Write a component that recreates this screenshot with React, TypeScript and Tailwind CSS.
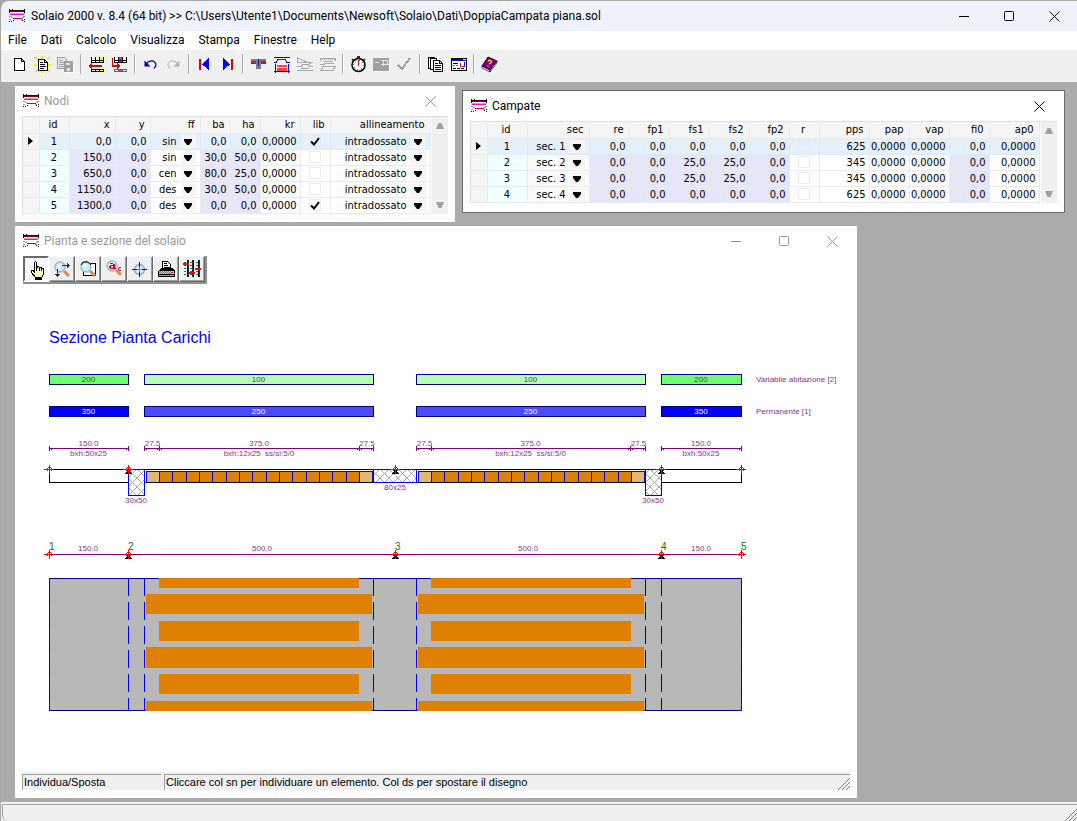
import type { ReactNode } from "react";

type IconProps = { children: ReactNode; w?: number; h?: number };

function Icon({ children, w = 17, h = 17 }: IconProps) {
  return (
    <svg width={w} height={h} viewBox={`0 0 ${w} ${h}`} shapeRendering="crispEdges" fill="none" aria-hidden="true" className="shrink-0">
      {children}
    </svg>
  );
}

function AppIcon() {
  return (
    <Icon w={17} h={14}>
      <path d="M0 1h16v1H0z" fill="#400000" />
      <path d="M0 0h1v1H0zM3 0h1v1H3zM15 0h1v1h-1zM0 3h1v1H0zM15 3h1v1h-1zM0 1h1v2H0zM15 1h1v2h-1z" fill="#000" />
      <path d="M1 2h14v1H1z" fill="#900000" />
      <path d="M1 4h15v1H1z" fill="#c8a0c8" />
      <path d="M1 5h14v1H1z" fill="#ff00ff" />
      <path d="M0 7h2v1H0zM2 8h2v1H2zM0 10h2v1H0zM14 7h2v1h-2zM13 8h2v1h-2zM12 10h2v1h-2z" fill="#999" />
      <path d="M4 9h9v1H4z" fill="#e00000" />
      <path d="M2 12h1v1H2zM4 11h1v1H4zM0 12h1v1H0zM13 11h1v1h-1zM15 10h1v1h-1zM15 12h1v1h-1z" fill="#000" />
    </Icon>
  );
}

const mainIcons: (ReactNode | null)[] = [
  <Icon>
    <path d="M3 2h8l3 3v11H3z" fill="#fff" />
    <path d="M3.500 2.500h7l3 3v9h-10zM10.500 2.500v3h3" stroke="#000" />
  </Icon>,
  <Icon>
    <path d="M1 1l3 3M16 1l-3 3M1 16l3-3M16 16l-3-3M0 9h3M14 9h3M8 0v3M8 14v3" stroke="#ffee00" strokeWidth="1.500" />
    <path d="M4.500 3.500h6l3 3v8h-9z" fill="#fff" stroke="#000" />
    <path d="M10.500 3.500v3h3M6 6.500h3M6 8.500h5M6 10.500h6M6 12.500h4" stroke="#000" />
  </Icon>,
  <Icon>
    <path d="M.5 1.500h7l2 2v9h-9z" fill="#e8e8e8" stroke="#a0a0a0" />
    <path d="M2 4.500h4M2 6.500h6M2 8.500h5M2 10.500h5" stroke="#a0a0a0" />
    <path d="M7 5h9v11H7z" fill="#a0a0a0" />
    <path d="M9 7h4v2H9zM10 12h3v3h-3z" fill="#e8e8e8" />
    <path d="M16.500 6v10.500H8" stroke="#fff" />
  </Icon>,
  null,
  <Icon>
    <path d="M4 2h8v5H4zM4 13h8v3H4z" fill="#fff" />
    <path d="M12 1h4v6h-4zM12 13h4v3h-4z" fill="#ffff00" />
    <path d="M3 4.500h13M3 6.500h13M3.500 1v6M7.500 1v6M11.500 1v6M15.500 1v6M3.500 13.500h12v2h-12zM7.500 13v3M11.500 13v3" stroke="#000" />
    <path d="M1 9h13v2H1z" fill="#e00000" />
    <path d="M0 10l4-3v6z" fill="#e00000" />
  </Icon>,
  <Icon>
    <path d="M4 2h4v5H4zM12 2h4v5h-4z" fill="#fff" />
    <path d="M8 1h4v6H8zM8 13h4v3H8z" fill="#ff00ff" />
    <path d="M3 4.500h13M3 6.500h13M3.500 1v6M7.500 1v6M11.500 1v6M15.500 1v6" stroke="#000" />
    <path d="M3.500 13.500h12v2h-12zM7.500 13v3M11.500 13v3" stroke="#606060" />
    <path d="M1.500 2v8M1 10h7" stroke="#e00000" strokeWidth="1.500" />
    <path d="M10 10l-4-3v6z" fill="#e00000" />
  </Icon>,
  null,
  <svg width="17" height="17" viewBox="0 0 17 17" fill="none" aria-hidden="true">
    <path d="M4 8.500C6 5 10 4 12.500 6s1.500 4-.5 6.500" stroke="#000096" strokeWidth="1.200" />
    <path d="M2.500 4.500v6h6z" fill="#000096" />
  </svg>,
  <svg width="17" height="17" viewBox="0 0 17 17" fill="none" aria-hidden="true">
    <path d="M13 8.500C11 5 7 4 4.500 6s-1.500 4 .5 6.500" stroke="#a8a8a8" />
    <path d="M14.500 4.500v6h-6z" fill="#b0b0b0" />
  </svg>,
  null,
  <Icon>
    <path d="M3 3h2v11H3z" fill="#e00000" />
    <path d="M13 2v12L6 8.500z" fill="#0000ff" />
  </Icon>,
  <Icon>
    <path d="M12 3h2v11h-2z" fill="#e00000" />
    <path d="M4 2v12l7-5.500z" fill="#0000ff" />
  </Icon>,
  null,
  <Icon>
    <path d="M1 3h15v5h-5v5H6V8H1z" fill="#808080" />
    <path d="M1 5h15v3H1z" fill="#ff0000" />
    <path d="M6 3h5v10H6z" fill="#808080" />
    <path d="M8 3h1v7H8z" fill="#0000ff" />
  </Icon>,
  <Icon>
    <path d="M1 1.500h16M1 6.500h2l2-3h7l2 3h3M1 15.500h16M2.500 8v9M15.500 8v9" stroke="#0000ff" />
    <path d="M5 3.500h7" stroke="#404040" />
    <path d="M4 9h10v2H4zM4 12h10v3H4z" fill="#ff4040" />
  </Icon>,
  <Icon>
    <path d="M1.500 1v5h15M2 2l13 6M1 10.500h4l2-2h5l2 2h3M1 14.500h16M5 12.500h8" stroke="#a8a8a8" />
  </Icon>,
  <Icon>
    <path d="M1 2.500h16M1.500 2v3M16.500 2v3M4 5.500h10M1 8.500h4l1-1h9M4 10.500h12l-2 4H2z" stroke="#a8a8a8" />
    <path d="M3 3.500h13" stroke="#a8a8a8" strokeDasharray="1 1" />
  </Icon>,
  null,
  <svg width="17" height="17" viewBox="0 0 17 17" fill="none" aria-hidden="true">
    <path d="M7 1h3M8.500 1v2M2 3l2 2M15 3l-2 2" stroke="#000" strokeWidth="1.500" />
    <circle cx="8.500" cy="9" r="6.500" fill="#fff" stroke="#000" strokeWidth="1.500" />
    <circle cx="8.500" cy="9" r="4.800" stroke="#000" strokeDasharray="1 2.770" />
    <path d="M8.500 4v6" stroke="#e00000" />
  </svg>,
  <Icon>
    <path d="M0 2h16v13H0z" fill="#a0a0a0" />
    <path d="M8 4.500h7M10.500 5v5M14.500 5v4M2 6.500h4M8 8.500h8" stroke="#e8e8e8" />
    <path d="M16.500 3v12.500H1" stroke="#fff" />
  </Icon>,
  <Icon>
    <path d="M3 10l3 4 8-11" stroke="#fff" strokeWidth="2" />
    <path d="M2 9l4 4 8-11" stroke="#a0a0a0" strokeWidth="2" />
  </Icon>,
  null,
  <Icon>
    <path d="M1.500 1.500h6v11h-6z" fill="#fff" stroke="#000" />
    <path d="M3.500 2.500h6v11h-6z" fill="#fff" stroke="#000" />
    <path d="M6.500 4.500h6l3 3v8h-9z" fill="#fff" stroke="#000" />
    <path d="M12.500 4.500v3h3M8 7.500h3M8 9.500h6M8 11.500h6M8 13.500h6" stroke="#000" />
  </Icon>,
  <Icon>
    <path d="M1.500 2.500h15v12h-15z" fill="#fff" stroke="#000" />
    <path d="M2 3h14v2H2z" fill="#0000c8" />
    <path d="M13 3h3v1h-3z" fill="#fff" />
    <path d="M3 7.500h5M3 12.500h3M7 12.500h3M11 12.500h3" stroke="#000" />
    <path d="M3 9.500h2M6 9.500h2" stroke="#009090" />
    <path d="M10.500 7v4M12 10.500h3" stroke="#e00000" />
    <path d="M14.500 6v4" stroke="#0000ff" />
  </Icon>,
  null,
  <svg width="17" height="17" viewBox="0 0 17 17" fill="none" aria-hidden="true">
    <path d="M1 10l8 4v2l-8-4zM9 14l7-9v2l-7 9z" fill="#fff" stroke="#300030" strokeWidth=".7" />
    <path d="M7 1l9 4-7 9-8-4z" fill="#800080" stroke="#300030" />
    <path d="M7 5.500l1.500-1.500 2 1v1.500L8 8M7 9.500v1" stroke="#ffee00" strokeWidth="1.200" />
  </svg>,
];

const mainNames = ["Nuovo", "Esempio", "Copia", "", "Inserisci riga", "Aggiungi riga", "", "Annulla", "Ripeti", "", "Primo", "Ultimo", "", "Sezioni", "Solaio", "Momenti", "Armature", "", "Calcola", "Disegno", "Verifica", "", "Relazione", "Finestra", "", "Guida"];

function Lens({ x, y }: { x: number; y: number }) {
  return (
    <g shapeRendering="auto">
      <path d={`M${x + 4} ${y + 4}l5 5`} stroke="#e08a4a" strokeWidth="3" />
      <circle cx={x} cy={y} r="5" fill="#cfe8fb" stroke="#8fb4dc" strokeWidth="1.300" />
      <circle cx={x - 1} cy={y - 1} r="2" fill="#eef8ff" />
    </g>
  );
}

const drawTools: { name: string; icon: ReactNode }[] = [
  {
    name: "Individua/Sposta",
    icon: (
      <Icon w={20} h={20}>
        <path d="M8.500 12.500V2.500l1-1 1 1v5l2-1 1 1 2 0 1 1 1 0v6l-2 3v2h-6v-2l-4-5v-2h2z" fill="#ffffc8" stroke="#000" />
        <path d="M10.500 7v4M13.500 8v3M15.500 8v3" stroke="#000" />
        <path d="M9 18h7" stroke="#000" strokeWidth="2" />
      </Icon>
    ),
  },
  {
    name: "Zoom dinamico",
    icon: (
      <Icon w={20} h={20}>
        <Lens x={8} y={8} />
        <path d="M10 6.500h8M16.500 5v3M15.500 4v5M5.500 10v8M4 16.500h3M3 15.500h5" stroke="#303030" />
      </Icon>
    ),
  },
  {
    name: "Zoom finestra",
    icon: (
      <Icon w={20} h={20}>
        <path d="M5.500 4.500h12v12h-12z" fill="#fff" stroke="#000" />
        <Lens x={8} y={8} />
        <path d="M3 6l2-3h5l3 3" stroke="#000" shapeRendering="auto" />
      </Icon>
    ),
  },
  {
    name: "Zoom testo",
    icon: (
      <Icon w={20} h={20}>
        <Lens x={8} y={7} />
        <path d="M6 4h3v1H6zM9 5h2v5H9zM6 6h3v1H6zM5 7h2v2H5zM6 9h6v1H6zM15 8h2v1h-2zM14 9h1v2h-1zM15 11h2v1h-2z" fill="#e00000" />
      </Icon>
    ),
  },
  {
    name: "Centra",
    icon: (
      <svg width="20" height="20" viewBox="0 0 20 20" fill="none" aria-hidden="true">
        <circle cx="9.500" cy="10.500" r="5" fill="#d6ecfb" stroke="#7fa8d0" strokeWidth="1.300" />
        <path d="M9.500 3v5M9.500 13v5M2 10.500h5M12 10.500h5" stroke="#202020" />
        <path d="M9.500 8v5M7 10.500h5" stroke="#5a8fa8" />
      </svg>
    ),
  },
  {
    name: "Stampa",
    icon: (
      <Icon w={20} h={20}>
        <path d="M6.500 9.500v-7h5l3 3v4" fill="#fff" stroke="#000" />
        <path d="M8 4.500h3M8 6.500h4M8 8.500h6" stroke="#000" />
        <path d="M2 12l3-3h11l3 3v6H2z" fill="#000" />
        <path d="M3 12h15v3H3z" fill="#c8c8c8" />
        <path d="M4 12.500h12M3 13.500h12M4 14.500h12" stroke="#808080" strokeDasharray="1 1" />
        <path d="M3 16h15v1H3z" fill="#a0a0a0" />
        <path d="M15 13h2v1h-2z" fill="#e00000" />
      </Icon>
    ),
  },
  {
    name: "Opzioni",
    icon: (
      <Icon w={20} h={20}>
        <path d="M3 3v14M9 3v14M15 3v14" stroke="#008080" strokeWidth="2" strokeDasharray="1 2" />
        <path d="M5 1h1v17H5zM11 1h1v17h-1zM16 1h1v17h-1z" fill="#000" />
        <path d="M6 1h1v17H6zM10 1h1v17h-1zM17 1h1v17h-1z" fill="#303030" />
        <path d="M1 4h6v2H1zM7 13h6v2H7zM13 9h6v2h-6z" fill="#ff0000" />
      </Icon>
    ),
  },
];

function CloseGlyph() {
  return (
    <svg width="11" height="11" viewBox="0 0 11 11" fill="none" stroke="currentColor" aria-hidden="true">
      <path d="M.5.5l10 10M10.500.5l-10 10" />
    </svg>
  );
}

function MinGlyph() {
  return (
    <svg width="11" height="11" viewBox="0 0 11 11" stroke="currentColor" aria-hidden="true">
      <path d="M0 5.500h10" />
    </svg>
  );
}

function MaxGlyph() {
  return (
    <svg width="11" height="11" viewBox="0 0 11 11" fill="none" stroke="currentColor" aria-hidden="true">
      <rect x=".5" y=".5" width="9" height="9" rx="1" />
    </svg>
  );
}

type Tone = "white" | "soft" | "lav" | "id";
type Column = { key: string; width: number; align: "left" | "right" | "center"; tone: Tone; kind?: "select" | "check" };

const toneClass: Record<Tone, string> = {
  white: "bg-white",
  soft: "bg-[#fafafa]",
  lav: "bg-[#e6e6fa]",
  id: "bg-[#f0ffff]",
};
const alignClass = { left: "text-left", right: "text-right", center: "text-center" };

const nodeColumns: Column[] = [
  { key: "id", width: 30, align: "center", tone: "id" },
  { key: "x", width: 46, align: "right", tone: "lav" },
  { key: "y", width: 35, align: "right", tone: "lav" },
  { key: "ff", width: 50, align: "right", tone: "white", kind: "select" },
  { key: "ba", width: 30, align: "right", tone: "lav" },
  { key: "ha", width: 30, align: "right", tone: "lav" },
  { key: "kr", width: 40, align: "right", tone: "soft" },
  { key: "lib", width: 30, align: "right", tone: "white", kind: "check" },
  { key: "allineamento", width: 100, align: "right", tone: "white", kind: "select" },
];
const nodeRows = [
  ["1", "0,0", "0,0", "sin", "0,0", "0,0", "0,0000", "1", "intradossato"],
  ["2", "150,0", "0,0", "sin", "30,0", "50,0", "0,0000", "", "intradossato"],
  ["3", "650,0", "0,0", "cen", "80,0", "25,0", "0,0000", "", "intradossato"],
  ["4", "1150,0", "0,0", "des", "30,0", "50,0", "0,0000", "", "intradossato"],
  ["5", "1300,0", "0,0", "des", "0,0", "0,0", "0,0000", "1", "intradossato"],
];

const spanColumns: Column[] = [
  { key: "id", width: 40, align: "center", tone: "id" },
  { key: "sec", width: 62, align: "right", tone: "soft", kind: "select" },
  { key: "re", width: 40, align: "right", tone: "lav" },
  { key: "fp1", width: 40, align: "right", tone: "lav" },
  { key: "fs1", width: 40, align: "right", tone: "lav" },
  { key: "fs2", width: 40, align: "right", tone: "lav" },
  { key: "fp2", width: 40, align: "right", tone: "lav" },
  { key: "r", width: 30, align: "center", tone: "white", kind: "check" },
  { key: "pps", width: 50, align: "right", tone: "white" },
  { key: "pap", width: 40, align: "right", tone: "soft" },
  { key: "vap", width: 40, align: "right", tone: "soft" },
  { key: "fi0", width: 40, align: "right", tone: "lav" },
  { key: "ap0", width: 50, align: "right", tone: "white" },
];
const spanRows = [
  ["1", "sec. 1", "0,0", "0,0", "0,0", "0,0", "0,0", "", "625", "0,0000", "0,0000", "0,0", "0,0000"],
  ["2", "sec. 2", "0,0", "0,0", "25,0", "25,0", "0,0", "", "345", "0,0000", "0,0000", "0,0", "0,0000"],
  ["3", "sec. 3", "0,0", "0,0", "25,0", "25,0", "0,0", "", "345", "0,0000", "0,0000", "0,0", "0,0000"],
  ["4", "sec. 4", "0,0", "0,0", "0,0", "0,0", "0,0", "", "625", "0,0000", "0,0000", "0,0", "0,0000"],
];

function SelectCell({ value, label }: { value: string; label: string }) {
  return (
    <span className="flex h-[15px] items-center pr-1">
      <select
        aria-label={label}
        defaultValue={value}
        className="h-[15px] w-full min-w-0 flex-1 appearance-none bg-transparent pr-1 text-right [text-align-last:right] leading-[15px] outline-none"
      >
        <option>{value}</option>
      </select>
      <svg width="15" height="13" viewBox="0 0 15 13" className="pointer-events-none shrink-0" aria-hidden="true">
        <rect width="15" height="13" fill="#f5f5f5" />
        <path d="M3 4h8v2L8 10H6L3 6z" fill="#000" />
      </svg>
    </span>
  );
}

function CheckCell({ checked, label, active }: { checked: boolean; label: string; active: boolean }) {
  return (
    <span className="relative flex h-[15px] items-center justify-center">
      <input
        type="checkbox"
        aria-label={label}
        defaultChecked={checked}
        className={`size-3 appearance-none border ${active ? "border-[#dcebf7]" : "border-[#ececec]"}`}
      />
      {checked && (
        <svg width="10" height="9" viewBox="0 0 10 9" fill="none" className="pointer-events-none absolute" aria-hidden="true">
          <path d="M1 4.500l3 3L9 1" stroke="#000" strokeWidth="2" />
        </svg>
      )}
    </span>
  );
}

function Scrollbar() {
  return (
    <div className="ml-px flex w-4 shrink-0 flex-col items-center justify-between bg-[#f0f0f0] py-1" aria-hidden="true">
      <svg width="8" height="9" viewBox="0 0 8 9">
        <path d="M0 8h8L5.500 2h-3z" fill="#a0a0a0" />
      </svg>
      <svg width="8" height="9" viewBox="0 0 8 9">
        <path d="M0 1h8L5.500 7h-3z" fill="#a0a0a0" />
      </svg>
    </div>
  );
}

function DataGrid({ caption, columns, rows }: { caption: string; columns: Column[]; rows: string[][] }) {
  return (
    <div className="flex border-t border-l border-[#e0e0e0] font-['DejaVu_Sans_Condensed','DejaVu_Sans',sans-serif] text-[11px] text-black">
      <table aria-label={caption} className="table-fixed border-collapse">
        <colgroup>
          <col className="w-4" />
          {columns.map((c) => (
            <col key={c.key} style={{ width: c.width }} />
          ))}
        </colgroup>
        <thead>
          <tr className="h-4 bg-[#f5f5f5]">
            <th className="border-r border-b border-[#ebebeb] p-0" />
            {columns.map((c) => (
              <th
                key={c.key}
                className={`border-r border-b border-[#ebebeb] p-0 font-normal leading-[15px] ${
                  c.align === "right" ? "pr-[5px]" : "pr-0.5"
                } ${alignClass[c.align]}`}
              >
                {c.key}
              </th>
            ))}
          </tr>
        </thead>
        <tbody>
          {rows.map((row, r) => (
            <tr key={row[0]} className="h-4">
              <td className="border-r border-b border-[#ebebeb] bg-[#f5f5f5] p-0">
                {r === 0 && (
                  <svg width="5" height="8" viewBox="0 0 5 8" className="mx-auto" aria-hidden="true">
                    <path d="M0 0l5 4-5 4z" fill="#000" />
                  </svg>
                )}
              </td>
              {columns.map((c, i) => (
                <td
                  key={c.key}
                  className={`border-r border-b p-0 leading-[15px] ${
                    r === 0 ? "border-[#dcebf7] bg-[#e4f1fb]" : `border-[#ebebeb] ${toneClass[c.tone]}`
                  } ${c.kind ? "" : c.align === "right" ? "pr-[3px]" : ""} ${alignClass[c.align]}`}
                >
                  {c.kind === "select" ? (
                    <SelectCell value={row[i]} label={`${c.key} ${row[0]}`} />
                  ) : c.kind === "check" ? (
                    <CheckCell checked={row[i] === "1"} label={`${c.key} ${row[0]}`} active={r === 0} />
                  ) : (
                    row[i]
                  )}
                </td>
              ))}
            </tr>
          ))}
        </tbody>
      </table>
      <Scrollbar />
    </div>
  );
}

const loadSpans = [
  { x: 49, w: 79, variable: "200", permanent: "350", heavy: true },
  { x: 144, w: 229, variable: "100", permanent: "250", heavy: false },
  { x: 416, w: 229, variable: "100", permanent: "250", heavy: false },
  { x: 661, w: 80, variable: "200", permanent: "350", heavy: true },
];
const sectionDims = [
  { a: 49, b: 128, text: "150.0", note: "bxh:50x25" },
  { a: 144, b: 159, text: "27.5" },
  { a: 159, b: 359, text: "375.0", note: "bxh:12x25  ss/si:5/0" },
  { a: 359, b: 373, text: "27.5" },
  { a: 416, b: 431, text: "27.5" },
  { a: 431, b: 630, text: "375.0", note: "bxh:12x25  ss/si:5/0" },
  { a: 630, b: 645, text: "27.5" },
  { a: 661, b: 741, text: "150.0", note: "bxh:50x25" },
];
const nodes = [
  { x: 49, id: "1", support: false },
  { x: 128, id: "2", support: true },
  { x: 395, id: "3", support: true },
  { x: 661, id: "4", support: true },
  { x: 741, id: "5", support: false },
];
const planDims = [
  { x: 88, text: "150.0" },
  { x: 262, text: "500.0" },
  { x: 528, text: "500.0" },
  { x: 701, text: "150.0" },
];
const beams = [
  { x: 128, w: 16, h: 26, text: "30x50", tx: 136, ty: 503 },
  { x: 373, w: 43, h: 13, text: "80x25", tx: 395, ty: 490 },
  { x: 645, w: 16, h: 26, text: "30x50", tx: 653, ty: 503 },
];
const planEdges = [
  { x: 128, color: "#0000ff" },
  { x: 144, color: "#0000ff" },
  { x: 373, color: "#0000c0" },
  { x: 416, color: "#0000ff" },
  { x: 645, color: "#101020" },
  { x: 661, color: "#101020" },
];

function NodeMark({ x, y, support }: { x: number; y: number; support: boolean }) {
  return (
    <g>
      {support && <path d={`M${x - 1} ${y + 1}h3v2h1v1h1v1h-7v-1h1v-1h1z`} fill="#000" />}
      <path
        d={`M${x - 5} ${y}h10v1h-10zM${x} ${y - 4}h1v9h-1zM${x - 1} ${y - 2}h3v1h-3zM${x - 2} ${y - 1}h1v3h-1zM${x + 2} ${y - 1}h1v3h-1z`}
        fill="#ff0000"
      />
    </g>
  );
}

function SlabDrawing() {
  return (
    <svg
      viewBox="15 284 842 488"
      width="842"
      height="488"
      fill="none"
      shapeRendering="crispEdges"
      role="img"
      aria-label="Sezione Pianta Carichi"
      className="font-['Liberation_Sans',Arial,sans-serif]"
    >
      <defs>
        <pattern id="hatch" x="128" y="469" width="9" height="9" patternUnits="userSpaceOnUse">
          <path d="M0 0l9 9M9 0L0 9" stroke="#a8a8a8" shapeRendering="auto" />
        </pattern>
      </defs>
      <text x="49" y="343" fill="#0000ff" className="text-[16px]">Sezione Pianta Carichi</text>

      {loadSpans.map((s) => (
        <g key={s.x} stroke="#000080">
          <rect x={s.x + 0.5} y="374.500" width={s.w} height="10" fill={s.heavy ? "#6eff6e" : "#b4ffb4"} />
          <rect x={s.x + 0.5} y="406.500" width={s.w} height="10" fill={s.heavy ? "#0000ff" : "#4b4bff"} />
          <g stroke="none" textAnchor="middle" className="text-[8px]">
            <text x={s.x + s.w / 2} y="382" fill="#6e286e">{s.variable}</text>
            <text x={s.x + s.w / 2} y="414" fill="#fff">{s.permanent}</text>
          </g>
        </g>
      ))}
      <g fill="#8c328c" className="text-[8px]">
        <text x="756" y="382">Variabile abitazione [2]</text>
        <text x="756" y="414">Permanente [1]</text>
      </g>

      {sectionDims.map((d) => (
        <g key={d.a}>
          <path d={`M${d.a} 448.500h${d.b - d.a}M${d.a + 0.5} 446v5M${d.b + 0.5} 446v5M${d.a + 2} 449.500h1M${d.b - 2} 449.500h1`} stroke="#800080" />
          <text x={(d.a + d.b) / 2 + (d.note ? 0 : 1)} y="446" textAnchor="middle" fill="#8c328c" className="text-[8px]">{d.text}</text>
          {d.note && (
            <text x={(d.a + d.b) / 2} y="456" textAnchor="middle" fill="#8c328c" xmlSpace="preserve" className="text-[8px]">{d.note}</text>
          )}
        </g>
      ))}

      <path d="M49 469.500h693M49.500 469v14M741.500 469v14M49 482.500h80M145 482.500h229M416 482.500h230M661 482.500h81" stroke="#000" />
      {[146, 418].map((x, k) => (
        <g key={x}>
          <path d={`M${x} 472h226v10h-226z`} fill="#e0b870" />
          <path d={`M${159 + k * 272} 472h200v10h-200z`} fill="#e08000" />
          <path d={`M${x} 471.500h227M${x + 0.5} 471v11M${x + 226.5} 471v11`} stroke="#0000ff" />
          {Array.from({ length: 16 }, (_, i) => (
            <path key={i} d={`M${Math.round(159 + k * 272 + (i * 40) / 3) + 0.5} 471v11`} stroke="#0000ff" />
          ))}
        </g>
      ))}
      {beams.map((b) => (
        <g key={b.x}>
          <rect x={b.x + 0.5} y="469.500" width={b.w} height={b.h} fill="#fff" />
          <rect x={b.x + 0.5} y="469.500" width={b.w} height={b.h} fill="url(#hatch)" stroke="#0000ff" />
          <text x={b.tx} y={b.ty} textAnchor="middle" fill="#8c328c" className="text-[8px]">{b.text}</text>
        </g>
      ))}

      <path d="M49 554.500h693" stroke="#800080" />
      {planDims.map((d) => (
        <text key={d.x} x={d.x} y="551" textAnchor="middle" fill="#8c328c" className="text-[8px]">{d.text}</text>
      ))}
      {nodes.map((n) => (
        <g key={n.id}>
          <NodeMark x={n.x} y={469} support={n.support} />
          <NodeMark x={n.x} y={554} support={n.support} />
          <text x={n.x} y="550" fill="#008000" className="text-[10px]">{n.id}</text>
        </g>
      ))}

      <rect x="49.500" y="578.500" width="692" height="132" fill="#b8b8b8" stroke="#000080" />
      <path d="M49.500 578v133M741.500 578v133" stroke="#0000ff" strokeDasharray="18 6" />
      {planEdges.map((e) => (
        <path key={e.x} d={`M${e.x + 0.5} 578v133`} stroke={e.color} strokeDasharray="18 6" />
      ))}
      {[0, 272].map((dx) => (
        <path
          key={dx}
          d={`M${159 + dx} 578h200v10h-200zM${159 + dx} 621h200v20h-200zM${159 + dx} 674h200v20h-200zM${146 + dx} 594h226v20h-226zM${146 + dx} 647h226v21h-226zM${146 + dx} 701h226v10h-226z`}
          fill="#e08000"
        />
      ))}
    </svg>
  );
}

function SizeGrip() {
  return (
    <svg width="13" height="13" viewBox="0 0 13 13" fill="none" stroke="#808080" aria-hidden="true" className="shrink-0 self-end">
      <path d="M1 13L13 1M5 13l8-8M9 13l4-4" />
    </svg>
  );
}

export default function App() {
  return (
    <div className="flex min-h-screen flex-col border-t border-l border-[#a8a8a8] bg-[#ababab] font-['Roboto','Noto_Sans',sans-serif] text-black">
      <header className="flex h-[30px] items-center rounded-tl-lg bg-[#eef3fb] pl-2">
        <AppIcon />
        <h1 className="ml-[5px] flex-1 text-[12px] whitespace-nowrap">
          Solaio 2000 v. 8.4 (64 bit) &gt;&gt; C:\Users\Utente1\Documents\Newsoft\Solaio\Dati\DoppiaCampata piana.sol
        </h1>
        <div className="flex">
          <button aria-label="Riduci" className="flex h-7 w-[45px] items-center justify-center"><MinGlyph /></button>
          <button aria-label="Ingrandisci" className="flex h-7 w-[45px] items-center justify-center"><MaxGlyph /></button>
          <button aria-label="Chiudi" className="flex h-7 w-[45px] items-center justify-center"><CloseGlyph /></button>
        </div>
      </header>

      <nav className="flex h-[19px] items-center gap-[14px] bg-white pl-[7px] text-[12px]">
        {["File", "Dati", "Calcolo", "Visualizza", "Stampa", "Finestre", "Help"].map((m) => (
          <button key={m} className="leading-[19px]">{m}</button>
        ))}
      </nav>

      <div className="flex h-8 items-center bg-[#f0f0f0] pb-1 pl-[7px]" role="toolbar" aria-label="Strumenti">
        {mainIcons.map((icon, i) =>
          icon === null ? (
            <span key={i} className="mx-[3px] h-5 w-0.5 border-l border-r border-l-[#a8a8a8] border-r-white" />
          ) : (
            <button key={i} aria-label={mainNames[i]} className="flex h-[22px] w-[23px] items-center justify-center">
              {icon}
            </button>
          ),
        )}
      </div>

      <main className="relative min-h-[720px] flex-1 overflow-hidden">
        <section aria-label="Nodi" className="absolute top-1 left-[14px] bg-white px-[7px] pb-2">
          <div className="flex h-[30px] items-center pl-px text-[#999]">
            <AppIcon />
            <h2 className="ml-1 flex-1 text-[12px]">Nodi</h2>
            <button aria-label="Chiudi Nodi" className="mr-3"><CloseGlyph /></button>
          </div>
          <DataGrid caption="Nodi" columns={nodeColumns} rows={nodeRows} />
        </section>

        <section aria-label="Campate" className="absolute top-2 left-[461px] border border-[#6b6b6b] bg-white px-[7px] pb-[9px]">
          <div className="flex h-[30px] items-center pl-px">
            <AppIcon />
            <h2 className="ml-1 flex-1 text-[12px]">Campate</h2>
            <button aria-label="Chiudi Campate" className="mr-3"><CloseGlyph /></button>
          </div>
          <DataGrid caption="Campate" columns={spanColumns} rows={spanRows} />
        </section>

        <section aria-label="Pianta e sezione del solaio" className="absolute top-[144px] left-[14px] bg-white pb-2">
          <div className="flex h-[30px] items-center pr-px pl-2 text-[#999]">
            <AppIcon />
            <h2 className="ml-1 flex-1 text-[12px]">Pianta e sezione del solaio</h2>
            <button aria-label="Riduci finestra" className="flex w-12 justify-center"><MinGlyph /></button>
            <button aria-label="Ingrandisci finestra" className="flex w-12 justify-center"><MaxGlyph /></button>
            <button aria-label="Chiudi finestra" className="flex w-12 justify-center"><CloseGlyph /></button>
          </div>
          <div className="ml-2 flex w-fit border-r-2 border-b-2 border-[#909090]" role="toolbar" aria-label="Disegno">
            {drawTools.map((t, i) => (
              <button
                key={t.name}
                aria-label={t.name}
                aria-pressed={i === 0}
                className={`flex h-[26px] w-[26px] items-center justify-center ${
                  i === 0
                    ? "border-2 border-t-[#696969] border-r-white border-b-white border-l-[#696969] bg-[#f8f8f8] pt-0.5"
                    : "border border-t-white border-r-[#696969] border-b-[#696969] border-l-white bg-[#f0f0f0] shadow-[inset_-1px_-1px_0_#a0a0a0]"
                }`}
              >
                {t.icon}
              </button>
            ))}
          </div>
          <SlabDrawing />
          <footer className="mx-[7px] flex gap-[3px] bg-[#f0f0f0] pt-0.5 font-['Liberation_Sans',Arial,sans-serif] text-[11px] leading-[15px]">
            <span className="w-[139px] border-t border-l border-[#a0a0a0] pl-px">Individua/Sposta</span>
            <span className="flex flex-1 border-t border-l border-[#a0a0a0] pl-px">
              <span className="flex-1">Cliccare col sn per individuare un elemento. Col ds per spostare il disegno</span>
              <SizeGrip />
            </span>
          </footer>
        </section>
      </main>

      <footer className="border-t-2 border-[#f0f0f0] bg-[#f0f0f0]">
        <div className="ml-px flex h-[17px] justify-end rounded-bl-md border-t border-l border-[#a0a0a0]">
          <SizeGrip />
        </div>
      </footer>
    </div>
  );
}
